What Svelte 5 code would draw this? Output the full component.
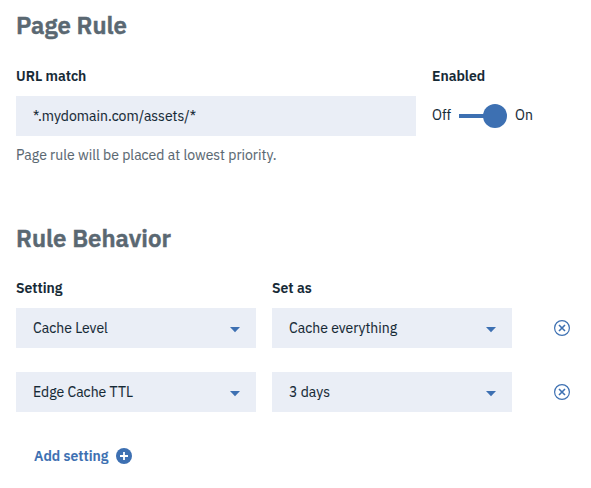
<script>
  const rows = [
    { setting: 'Cache Level', value: 'Cache everything' },
    { setting: 'Edge Cache TTL', value: '3 days' }
  ];
</script>

<main>
  <h2>Page Rule</h2>
  <div class="top">
    <section class="url">
      <div class="label">URL match</div>
      <div class="field">*.mydomain.com/assets/*</div>
      <p class="help">Page rule will be placed at lowest priority.</p>
    </section>
    <section>
      <div class="label">Enabled</div>
      <div class="toggle">
        <span class="off">Off</span>
        <svg width="48" height="24" viewBox="0 0 48 24"><path d="M0 10h36v4H0z" /><circle cx="36" cy="12" r="12" /></svg>
        <span class="on">On</span>
      </div>
    </section>
  </div>

  <h2 class="rule-title">Rule Behavior</h2>
  <div class="grid labels">
    <div class="label">Setting</div>
    <div class="label">Set as</div>
  </div>
  {#each rows as row}
    <div class="grid row">
      <div class="field select">
        <span>{row.setting}</span>
        <svg width="10" height="6" viewBox="0 0 10 6"><path d="M0 0h10L5 5.3z" /></svg>
      </div>
      <div class="field select">
        <span>{row.value}</span>
        <svg width="10" height="6" viewBox="0 0 10 6"><path d="M0 0h10L5 5.3z" /></svg>
      </div>
      <button class="remove" aria-label="Remove setting">
        <svg width="16" height="16" viewBox="0 0 16 16">
          <circle class="line" cx="8" cy="8" r="7.4" />
          <path class="line cross" d="M5 5l6 6M11 5l-6 6" />
        </svg>
      </button>
    </div>
  {/each}
  <button class="add">
    <span>Add setting</span>
    <svg width="16" height="16" viewBox="0 0 16 16"><circle cx="8" cy="8" r="8" /><path class="plus" d="M8 4v8M4 8h8" /></svg>
  </button>
</main>

<style>
  :global(body) { margin: 0; background: #fff; }
  main {
    box-sizing: border-box;
    width: 591px;
    height: 488px;
    padding: 7px 16px 0;
    overflow: hidden;
    font: 14px/20px "IBM Plex Sans", Roboto, sans-serif;
    color: #152935;
    -webkit-text-stroke: 0.1px currentColor;
  }
  span { white-space: nowrap; }
  h2 { margin: 0; height: 36px; font-size: 24px; line-height: 36px; font-weight: 600; color: #5a6872; -webkit-text-stroke: 0.5px currentColor; }
  .top { display: flex; gap: 16px; margin-top: 23px; height: 148px; }
  .url { width: 400px; }
  .label { height: 20px; margin-bottom: 10px; font-weight: 600; }
  .field { display: flex; align-items: center; box-sizing: border-box; height: 40px; padding: 0 16px 0 17px; background: #eaeef6; }
  .help { margin: 9px 0 0; color: #5a6872; }
  .toggle { display: flex; align-items: center; height: 40px; }
  .toggle span { padding-bottom: 2px; }
  .off { width: 27px; }
  .on { margin-left: 8px; }
  svg { display: block; flex: none; fill: #3d70b2; }
  .rule-title { margin-top: 6px; }
  .labels { margin-top: 22px; }
  .grid { display: grid; grid-template-columns: 240px 240px 68px; column-gap: 16px; }
  .row { margin-bottom: 24px; }
  .select { justify-content: space-between; }
  .select svg { margin-top: 4px; }
  button { border: 0; background: none; padding: 0; font: inherit; }
  .remove { justify-self: start; margin-left: 26px; }
  .line { fill: none; stroke: #3d70b2; stroke-width: 1.2; }
  .cross { stroke-width: 1.6; }
  .plus { stroke: #fff; stroke-width: 1.8; }
  .add { display: flex; align-items: center; gap: 8px; height: 40px; margin-left: 18px; color: #3d70b2; font-weight: 600; }
  .add span { width: 74px; text-align: left; }
</style>
